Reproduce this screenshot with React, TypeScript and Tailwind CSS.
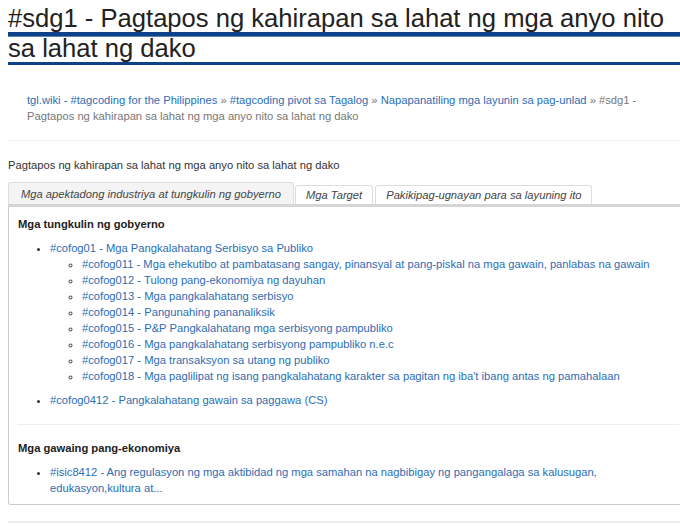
const cofog = [
  "#cofog011 - Mga ehekutibo at pambatasang sangay, pinansyal at pang-piskal na mga gawain, panlabas na gawain",
  "#cofog012 - Tulong pang-ekonomiya ng dayuhan",
  "#cofog013 - Mga pangkalahatang serbisyo",
  "#cofog014 - Pangunahing pananaliksik",
  "#cofog015 - P&P Pangkalahatang mga serbisyong pampubliko",
  "#cofog016 - Mga pangkalahatang serbisyong pampubliko n.e.c",
  "#cofog017 - Mga transaksyon sa utang ng publiko",
  "#cofog018 - Mga paglilipat ng isang pangkalahatang karakter sa pagitan ng iba't ibang antas ng pamahalaan",
];

function Crumb({ children }: { children: React.ReactNode }) {
  return <a href="#" className="text-[#2c6db5]">{children}</a>;
}

export default function App() {
  return (
    <div className="h-[531px] w-[680px] overflow-hidden bg-white font-['Liberation_Sans',Arial,sans-serif] text-[11.2px] leading-[16px] text-[#333]">
      <div className="ml-2 w-[690px]">
        <h1 className="bg-[linear-gradient(to_bottom,transparent_32px,#0d4289_32px,#0d4289_36px,#5b7fb3_36px,#5b7fb3_37px,transparent_37px,transparent_62px,#0d4289_62px,#0d4289_65px,transparent_65px)] pt-[3px] pb-[6px] pr-5 text-[25.6px] leading-[30px] font-normal text-[#222]">
          #sdg1 - Pagtapos ng kahirapan sa lahat ng mga anyo nito sa lahat ng dako
        </h1>

        <nav className="mt-[23px] pl-[19px] pr-[40px] text-[#777]">
          <Crumb>tgl.wiki - #tagcoding for the Philippines</Crumb> » <Crumb>#tagcoding pivot sa Tagalog</Crumb> »{" "}
          <Crumb>Napapanatiling mga layunin sa pag-unlad</Crumb> » #sdg1 - Pagtapos ng kahirapan sa lahat ng mga anyo nito
          sa lahat ng dako
        </nav>

        <hr className="mt-4 border-t border-[#eee]" />

        <p className="mt-4">Pagtapos ng kahirapan sa lahat ng mga anyo nito sa lahat ng dako</p>

        <div className="mt-[9px] flex items-end gap-[1px] border-b-[3px] border-[#d5d5d5] italic text-[#444]">
          <div className="h-[22px] rounded-t-[3px] border border-b-0 border-[#ddd] bg-[#f4f4f4] px-3 leading-[22px]">
            Mga apektadong industriya at tungkulin ng gobyerno
          </div>
          <div className="h-[19px] rounded-t-[3px] border border-b-0 border-[#ddd] bg-white px-[10px] leading-[19px]">
            Mga Target
          </div>
          <div className="ml-[1px] h-[19px] rounded-t-[3px] border border-b-0 border-[#ddd] bg-white px-[10px] leading-[19px]">
            Pakikipag-ugnayan para sa layuning ito
          </div>
        </div>

        <div className="rounded-b-[3px] border border-t-0 border-[#ccc] px-[9px] pt-[9px] pb-2">
          <h4 className="font-bold text-[#222]">Mga tungkulin ng gobyerno</h4>
          <ul className="mt-2 list-disc pl-8">
            <li className="mb-2">
              <a href="#" className="text-[#2c6db5]">#cofog01 - Mga Pangkalahatang Serbisyo sa Publiko</a>
              <ul className="list-[circle] pl-8">
                {cofog.map((c) => (
                  <li key={c}>
                    <a href="#" className="text-[#2c6db5]">{c}</a>
                  </li>
                ))}
              </ul>
            </li>
            <li>
              <a href="#" className="text-[#2c6db5]">#cofog0412 - Pangkalahatang gawain sa paggawa (CS)</a>
            </li>
          </ul>

          <hr className="mt-4 mr-[9px] border-t border-[#eee]" />

          <h4 className="mt-[15px] font-bold text-[#222]">Mga gawaing pang-ekonomiya</h4>
          <ul className="mt-2 list-disc pl-8 pr-[90px]">
            <li>
              <a href="#" className="text-[#2c6db5]">
                #isic8412 - Ang regulasyon ng mga aktibidad ng mga samahan na nagbibigay ng pangangalaga sa kalusugan, edukasyon,kultura at...
              </a>
            </li>
          </ul>
        </div>

        <hr className="mt-4 border-t-2 border-[#eee]" />
      </div>
    </div>
  );
}
